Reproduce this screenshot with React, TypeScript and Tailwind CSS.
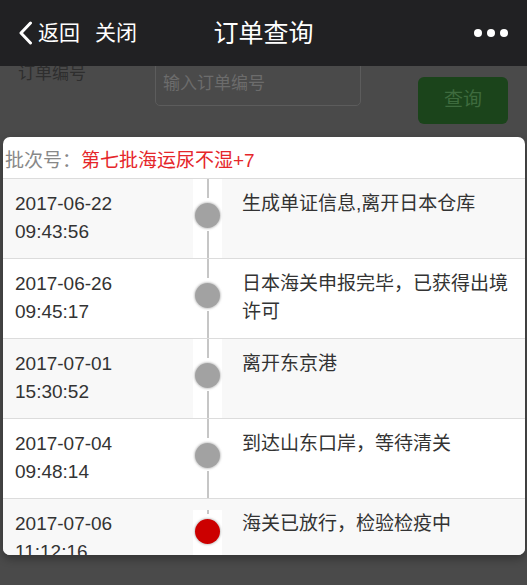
import React from "react";

const font = { fontFamily: '"Liberation Sans", "Noto Sans CJK SC", sans-serif' };

type Item = { date: string; time: string; text: string; alt: boolean; active?: boolean; last?: boolean };

const items: Item[] = [
  { date: "2017-06-22", time: "09:43:56", text: "生成单证信息,离开日本仓库", alt: true },
  { date: "2017-06-26", time: "09:45:17", text: "日本海关申报完毕，已获得出境许可", alt: false },
  { date: "2017-07-01", time: "15:30:52", text: "离开东京港", alt: true },
  { date: "2017-07-04", time: "09:48:14", text: "到达山东口岸，等待清关", alt: false },
  { date: "2017-07-06", time: "11:12:16", text: "海关已放行，检验检疫中", alt: true, active: true, last: true },
];

function Row({ item }: { item: Item }) {
  const bg = item.alt ? "bg-[#f8f8f8]" : "bg-white";
  return (
    <div className={`flex h-[80px] shrink-0 border-b border-[#dcdcdc] ${bg}`}>
      <div className="w-[190px] shrink-0 pl-[12px] pt-[11px] text-[19px] leading-[28px] text-[#333]">
        <div>{item.date}</div>
        <div>{item.time}</div>
      </div>
      <div className="w-[29px] shrink-0 flex flex-col">
        {item.last ? <div className="h-[11px] shrink-0" /> : null}
        <div className="flex-1 flex flex-col items-center bg-white">
          <div className={`w-[2px] ${item.last ? "h-[4px]" : "h-[19px]"} shrink-0 bg-[#c6c6c6]`} />
          <div
            className={`mt-[5px] w-[25px] h-[25px] shrink-0 rounded-full ${
              item.active ? "bg-[#cc0000]" : "bg-[#a2a2a2]"
            } shadow-[0_0_2px_1px_rgba(170,170,170,0.6)]`}
          />
          {item.last ? null : <div className="mt-[3px] w-[2px] flex-1 bg-[#c6c6c6]" />}
        </div>
      </div>
      <div className="flex-1 pl-[20px] pr-[8px] pt-[11px] text-[19px] leading-[28px] text-[#333]">
        {item.text}
      </div>
    </div>
  );
}

export default function App() {
  return (
    <div className="relative w-[527px] h-[585px] overflow-hidden bg-[#4a4a4a]" style={font}>
      {/* Top navigation bar */}
      <div className="relative z-10 h-[66px] bg-[#212123] flex items-center text-white">
        <div className="flex items-center pl-[18px]">
          <svg width="15" height="24" viewBox="0 0 15 24" className="mr-[5px]">
            <path d="M12.5 2 L3 12 L12.5 22" fill="none" stroke="white" strokeWidth="3" strokeLinecap="round" strokeLinejoin="round" />
          </svg>
          <span className="text-[21px] leading-[24px]">返回</span>
          <span className="ml-[15px] text-[21px] leading-[24px]">关闭</span>
        </div>
        <div className="absolute left-0 right-0 text-center text-[25px] leading-[30px] pointer-events-none">订单查询</div>
        <div className="ml-auto mr-[19px] flex gap-[5px]">
          <span className="w-[8px] h-[8px] rounded-full bg-white" />
          <span className="w-[8px] h-[8px] rounded-full bg-white" />
          <span className="w-[8px] h-[8px] rounded-full bg-white" />
        </div>
      </div>

      {/* Dimmed page behind the dialog */}
      <div className="mt-[-4px] px-[18px] flex flex-col gap-[20px]">
        <div className="flex">
          <div className="w-[137px] shrink-0 text-[17px] leading-[24px] text-[#2e2e2e]">订单编号</div>
          <div className="w-[206px] h-[44px] shrink-0 rounded-[5px] border border-[#5c5c5c] flex items-center pl-[7px] text-[17px] text-[#6c6c6c]">
            输入订单编号
          </div>
          <div className="ml-[57px] mt-[15px] w-[90px] h-[47px] rounded-[6px] bg-[#1b441b] flex items-center justify-center text-[19px] text-[#3e6b3e]">
            查询
          </div>
        </div>
        <div className="flex">
          <div className="w-[137px] shrink-0 pt-[4px] text-[17px] leading-[24px] text-[#2e2e2e]">订单状态</div>
          <div className="w-[206px] h-[44px] shrink-0 rounded-[5px] border border-[#5c5c5c] flex">
            <div className="flex-1 pl-[7px] pt-[8px] text-[17px] text-[#2e2e2e]">全部订单</div>
            <div className="w-[28px] bg-[#3e3e3e]" />
          </div>
        </div>
      </div>

      {/* Dialog */}
      <div className="absolute left-[3px] top-[137px] w-[522px] h-[418px] rounded-[7px] bg-white overflow-hidden flex flex-col shadow-[0_4px_8px_rgba(0,0,0,0.3)]">
        <div className="h-[42px] shrink-0 border-b border-[#dcdcdc] pl-[2px] pt-[12px] text-[19px] leading-[24px]">
          <span className="text-[#888]">批次号：</span>
          <span className="text-[#e5262a]">第七批海运尿不湿+7</span>
        </div>
        {items.map((it) => (
          <Row key={it.date} item={it} />
        ))}
      </div>
    </div>
  );
}
